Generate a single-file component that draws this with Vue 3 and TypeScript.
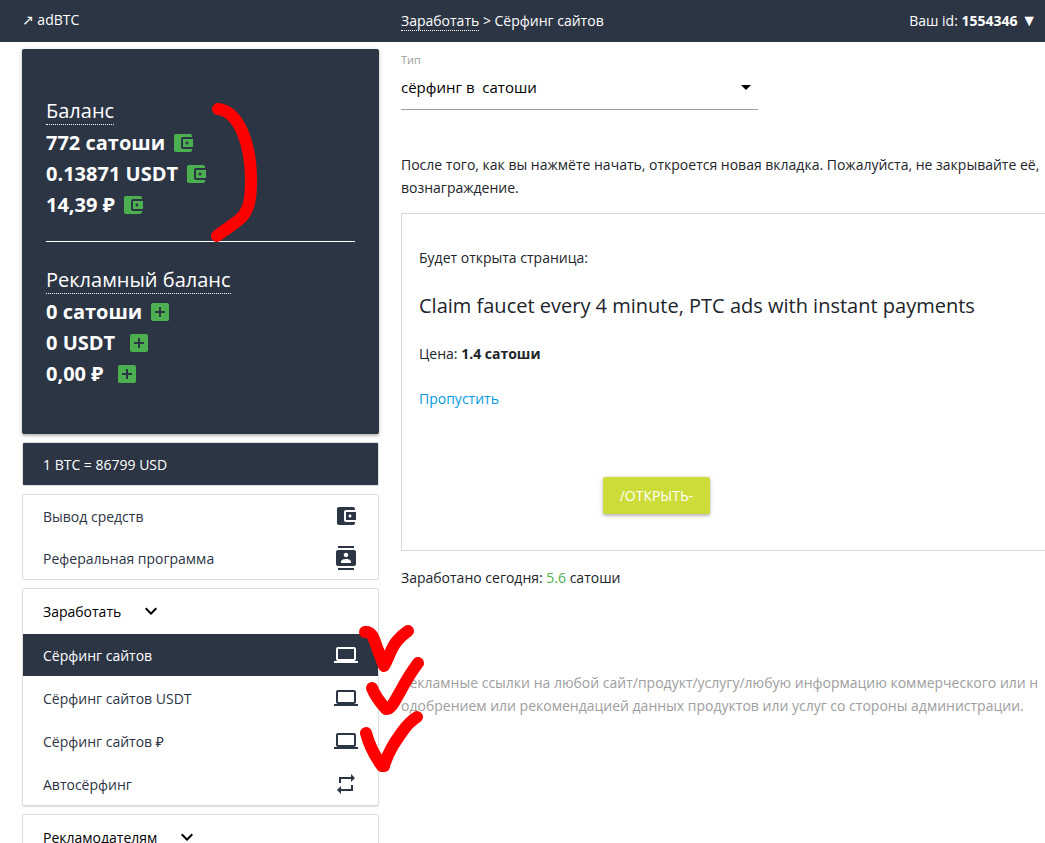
<script setup lang="ts">
import { ref } from 'vue'

type IconName = 'wallet' | 'addBox' | 'contacts' | 'laptop' | 'repeat' | 'expand'

interface Amount {
  text: string
  wide?: boolean
}

interface MenuItem {
  label: string
  icon: IconName
  active?: boolean
}

const icons: Record<IconName, string> = {
  wallet:
    'M21 18v1c0 1.1-.9 2-2 2H5c-1.11 0-2-.9-2-2V5c0-1.1.89-2 2-2h14c1.1 0 2 .9 2 2v1h-9c-1.11 0-2 .9-2 2v8c0 1.1.89 2 2 2h9zm-9-2h10V8H12v8zm4-2.5c-.83 0-1.5-.67-1.5-1.5s.67-1.5 1.5-1.5 1.5.67 1.5 1.5-.67 1.5-1.5 1.5z',
  addBox:
    'M19 3H5c-1.11 0-2 .9-2 2v14c0 1.1.89 2 2 2h14c1.1 0 2-.9 2-2V5c0-1.1-.9-2-2-2zm-2 10h-4v4h-2v-4H7v-2h4V7h2v4h4v2z',
  contacts:
    'M20 0H4v2h16V0zM4 24h16v-2H4v2zM20 4H4c-1.1 0-2 .9-2 2v12c0 1.1.9 2 2 2h16c1.1 0 2-.9 2-2V6c0-1.1-.9-2-2-2zm-8 2.75c1.24 0 2.25 1.01 2.25 2.25s-1.01 2.25-2.25 2.25S9.75 10.24 9.75 9 10.76 6.75 12 6.75zM17 17H7v-1.5c0-1.67 3.33-2.5 5-2.5s5 .83 5 2.5V17z',
  laptop:
    'M20 18c1.1 0 1.99-.9 1.99-2L22 6c0-1.1-.9-2-2-2H4c-1.1 0-2 .9-2 2v10c0 1.1.9 2 2 2H0v2h24v-2h-4zM4 6h16v10H4V6z',
  repeat: 'M7 7h10v3l4-4-4-4v3H5v6h2V7zm10 10H7v-3l-4 4 4 4v-3h12v-6h-2v4z',
  expand: 'M16.59 8.59L12 13.17 7.41 8.59 6 10l6 6 6-6z',
}

const balance: Amount[] = [{ text: '772 сатоши' }, { text: '0.13871 USDT' }, { text: '14,39 ₽' }]
const adBalance: Amount[] = [
  { text: '0 сатоши' },
  { text: '0 USDT', wide: true },
  { text: '0,00 ₽', wide: true },
]

const account: MenuItem[] = [
  { label: 'Вывод средств', icon: 'wallet' },
  { label: 'Реферальная программа', icon: 'contacts' },
]

const earn: MenuItem[] = [
  { label: 'Сёрфинг сайтов', icon: 'laptop', active: true },
  { label: 'Сёрфинг сайтов USDT', icon: 'laptop' },
  { label: 'Сёрфинг сайтов ₽', icon: 'laptop' },
  { label: 'Автосёрфинг', icon: 'repeat' },
]

const kind = ref('satoshi')
</script>

<template>
  <div class="page">
    <header class="topbar">
      <a class="brand" href="#"><span class="brand-arrow">↗</span> adBTC</a>
      <nav class="crumbs"><a href="#">Заработать</a> &gt; Сёрфинг сайтов</nav>
      <button class="user" type="button">
        Ваш id: <b>1554346</b> <span class="user-arrow">▼</span>
      </button>
    </header>

    <div class="columns">
      <aside class="sidebar">
        <section class="balance-card">
          <h2><a href="#">Баланс</a></h2>
          <p v-for="row in balance" :key="row.text" class="amount">
            {{ row.text }}
            <a href="#" aria-label="Вывод средств">
              <svg class="icon" viewBox="0 0 24 24"><path :d="icons.wallet" /></svg>
            </a>
          </p>
          <hr />
          <h2><a href="#">Рекламный баланс</a></h2>
          <p v-for="row in adBalance" :key="row.text" class="amount" :class="{ wide: row.wide }">
            {{ row.text }}
            <a href="#" aria-label="Пополнить">
              <svg class="icon" viewBox="0 0 24 24"><path :d="icons.addBox" /></svg>
            </a>
          </p>
        </section>

        <div class="panel rate">1 BTC = 86799 USD</div>

        <nav class="panel">
          <a v-for="item in account" :key="item.label" class="item" href="#">
            {{ item.label }}
            <svg class="icon" viewBox="0 0 24 24"><path :d="icons[item.icon]" /></svg>
          </a>
        </nav>

        <nav class="panel raised">
          <button class="group" type="button">
            Заработать
            <svg class="icon" viewBox="0 0 24 24"><path :d="icons.expand" /></svg>
          </button>
          <a
            v-for="item in earn"
            :key="item.label"
            class="item"
            :class="{ active: item.active }"
            href="#"
          >
            {{ item.label }}
            <svg class="icon" viewBox="0 0 24 24"><path :d="icons[item.icon]" /></svg>
          </a>
        </nav>

        <nav class="panel">
          <button class="group" type="button">
            Рекламодателям
            <svg class="icon" viewBox="0 0 24 24"><path :d="icons.expand" /></svg>
          </button>
        </nav>
      </aside>

      <main class="content">
        <div class="field">
          <label for="kind">Тип</label>
          <div class="select-wrap">
            <select id="kind" v-model="kind">
              <option value="satoshi">сёрфинг в&nbsp; сатоши</option>
            </select>
            <svg class="caret" viewBox="0 0 10 5"><path d="M0 0h10L5 5z" /></svg>
          </div>
        </div>

        <p class="intro">
          После того, как вы нажмёте начать, откроется новая вкладка. Пожалуйста, не закрывайте её,<br />
          вознаграждение.
        </p>

        <section class="task">
          <p>Будет открыта страница:</p>
          <h1>Claim faucet every 4 minute, PTC ads with instant payments</h1>
          <p>Цена: <b>1.4 сатоши</b></p>
          <p class="skip"><a href="#">Пропустить</a></p>
          <div class="action">
            <button class="open" type="button">/ОТКРЫТЬ-</button>
          </div>
        </section>

        <p class="today">Заработано сегодня: <span>5.6</span> сатоши</p>

        <p class="notice">
          Рекламные ссылки на любой сайт/продукт/услугу/любую информацию коммерческого или н<br />
          одобрением или рекомендацией данных продуктов или услуг со стороны администрации.
        </p>
      </main>
    </div>

    <svg class="marks" viewBox="0 0 440 780" aria-hidden="true">
      <path d="M218 109C230 110 237 120 242 131C249 147 251 163 251 180C251 196 250 208 242 217C234 225 225 229 217 236" />
      <path d="M365 632C373 631 374 640 378 650L384 666C390 655 391 648 397 641Q402 635 408 631" />
      <path d="M372 688Q376 698 386 709C392 709 395 700 400 692Q409 675 418 663" />
      <path d="M366 733Q370 749 382 766H384C388 752 395 742 402 732Q409 722 417 717" />
    </svg>
  </div>
</template>

<style>
body {
  margin: 0;
  background: #fff;
}
</style>

<style scoped>
.page {
  position: relative;
  height: 100vh;
  overflow: hidden;
  font-family: 'Open Sans', 'Noto Sans', sans-serif;
  font-size: 14px;
  line-height: 23px;
  color: #212529;
}

a {
  color: inherit;
  text-decoration: none;
}

button {
  border: 0;
  padding: 0;
  background: none;
  color: inherit;
  font: inherit;
  cursor: pointer;
}

h1,
h2,
p {
  margin: 0;
  font-weight: 400;
}

.icon {
  width: 24px;
  height: 24px;
  flex: none;
  fill: currentColor;
}

.topbar,
.columns {
  display: grid;
  grid-template-columns: 357px minmax(0, 1fr);
  column-gap: 22px;
  padding-left: 22px;
}

.topbar {
  grid-template-columns: 357px minmax(0, 1fr) auto;
  align-items: center;
  height: 40px;
  padding-right: 8px;
  padding-bottom: 2px;
  background: #2c3544;
  color: #fff;
}

.brand-arrow {
  font-family: 'DejaVu Sans', sans-serif;
  font-size: 14px;
}

.user-arrow {
  font-size: 16px;
  line-height: 16px;
}

.crumbs a {
  border-bottom: 1px dotted #fff;
}

.sidebar {
  display: flex;
  flex-direction: column;
  gap: 8px;
  padding-top: 7px;
}

.balance-card {
  padding: 46px 24px 45px;
  border-radius: 2px;
  background: #2c3544;
  color: #fff;
  box-shadow: 0 2px 2px rgba(0, 0, 0, 0.14), 0 1px 5px rgba(0, 0, 0, 0.2);
}

.balance-card h2 {
  font-size: 20px;
  line-height: 32px;
}

.balance-card h2 a {
  border-bottom: 1px dotted #fff;
}

.amount {
  display: flex;
  align-items: center;
  gap: 6px;
  height: 31px;
  font-size: 20px;
  font-weight: 700;
}

.amount.wide {
  gap: 12px;
}

.amount a {
  display: flex;
  color: #4caf50;
}

.balance-card hr {
  height: 1px;
  margin: 21px 0 22px;
  border: 0;
  background: #fff;
}

.panel {
  border: 1px solid #dcdfe2;
  border-radius: 2px;
}

.rate {
  padding: 10px 20px 9px;
  background: #2c3544;
  color: #fff;
}

.raised {
  display: flex;
  flex-direction: column;
  gap: 1px;
  box-shadow: 0 1px 1px rgba(0, 0, 0, 0.14);
}

.item {
  display: flex;
  align-items: center;
  justify-content: space-between;
  height: 42px;
  padding: 0 20px;
  color: #2c3544;
}

.item.active {
  background: #2c3544;
  color: #fff;
}

.group {
  display: flex;
  align-items: center;
  gap: 18px;
  width: 100%;
  height: 44px;
  padding: 0 20px;
  color: #000;
}

.content {
  padding-top: 9px;
  white-space: nowrap;
  overflow: hidden;
}

.field {
  width: 357px;
}

.field label {
  display: block;
  font-size: 11px;
  line-height: 18px;
  color: #9e9e9e;
}

.select-wrap {
  position: relative;
  border-bottom: 1px solid #9e9e9e;
}

.select-wrap select {
  display: block;
  width: 100%;
  height: 40px;
  border: 0;
  padding: 0 0 3px;
  appearance: none;
  background: none;
  color: #000;
  font: inherit;
  font-size: 15px;
}

.caret {
  position: absolute;
  top: 16px;
  right: 7px;
  width: 10px;
  height: 5px;
  pointer-events: none;
}

.intro {
  margin-top: 43px;
}

.task {
  margin-top: 14px;
  padding: 32px 17px 36px;
  border: 1px solid #d5d7d9;
  border-right: 0;
}

.task h1 {
  margin: 21px 0 20px;
  font-size: 20px;
  line-height: 32px;
}

.skip {
  margin-top: 22px;
  color: #039be5;
}

.action {
  display: flex;
  justify-content: center;
  width: 78%;
  margin-top: 67px;
}

.open {
  height: 37px;
  padding: 0 17px;
  border-radius: 2px;
  background: #cddc39;
  color: #fff;
  box-shadow: 0 2px 2px rgba(0, 0, 0, 0.14), 0 1px 5px rgba(0, 0, 0, 0.2);
}

.today {
  margin-top: 15px;
}

.today span {
  color: #4caf50;
}

.notice {
  margin-top: 82px;
  color: #9e9e9e;
}

.marks {
  position: absolute;
  top: 0;
  left: 0;
  width: 440px;
  height: 780px;
  fill: none;
  stroke: #f00;
  stroke-width: 12px;
  stroke-linecap: round;
  stroke-linejoin: round;
  pointer-events: none;
}
</style>
